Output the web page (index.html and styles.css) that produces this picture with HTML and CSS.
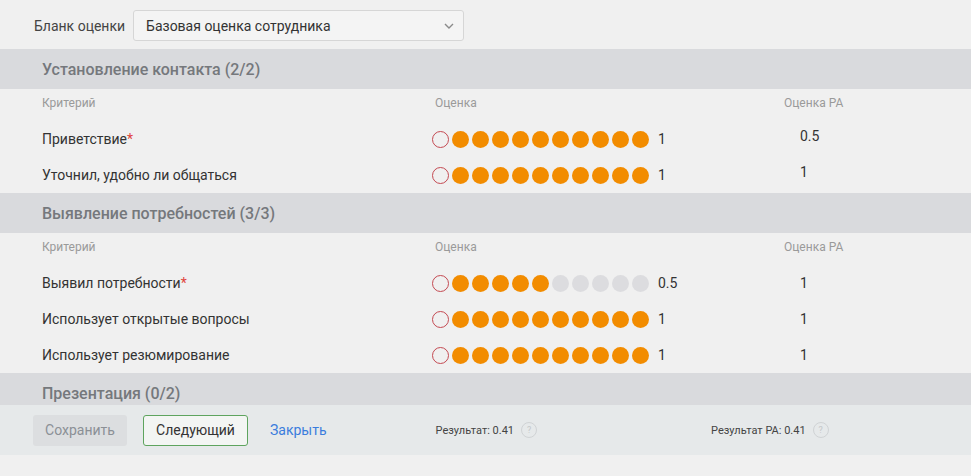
FILE: index.html
```html
<!DOCTYPE html>
<html lang="ru">
<head>
<meta charset="utf-8">
<title>Бланк оценки</title>
<link rel="stylesheet" href="styles.css">
</head>
<body>
<div class="page">
  <div class="topbar">
    <span class="top-label">Бланк оценки</span>
    <div class="select">
      <span>Базовая оценка сотрудника</span>
      <svg class="chev" width="10" height="6" viewBox="0 0 10 6"><path d="M1 1l4 4 4-4" fill="none" stroke="#8a8a8a" stroke-width="1.4"/></svg>
    </div>
  </div>

  <div class="content">
    <div class="section-title">Установление контакта (2/2)</div>
    <div class="row head">
      <div class="c-name">Критерий</div>
      <div class="c-score">Оценка</div>
      <div class="c-pa">Оценка РА</div>
    </div>
    <div class="row">
      <div class="c-name">Приветствие<span class="req">*</span></div>
      <div class="c-score"><span class="dots"><i class="zero"></i><i class="on"></i><i class="on"></i><i class="on"></i><i class="on"></i><i class="on"></i><i class="on"></i><i class="on"></i><i class="on"></i><i class="on"></i><i class="on"></i></span><span class="val">1</span></div>
      <div class="c-pa up">0.5</div>
    </div>
    <div class="row">
      <div class="c-name">Уточнил, удобно ли общаться</div>
      <div class="c-score"><span class="dots"><i class="zero"></i><i class="on"></i><i class="on"></i><i class="on"></i><i class="on"></i><i class="on"></i><i class="on"></i><i class="on"></i><i class="on"></i><i class="on"></i><i class="on"></i></span><span class="val">1</span></div>
      <div class="c-pa up">1</div>
    </div>

    <div class="section-title">Выявление потребностей (3/3)</div>
    <div class="row head">
      <div class="c-name">Критерий</div>
      <div class="c-score">Оценка</div>
      <div class="c-pa">Оценка РА</div>
    </div>
    <div class="row">
      <div class="c-name">Выявил потребности<span class="req">*</span></div>
      <div class="c-score"><span class="dots"><i class="zero"></i><i class="on"></i><i class="on"></i><i class="on"></i><i class="on"></i><i class="on"></i><i></i><i></i><i></i><i></i><i></i></span><span class="val">0.5</span></div>
      <div class="c-pa">1</div>
    </div>
    <div class="row">
      <div class="c-name">Использует открытые вопросы</div>
      <div class="c-score"><span class="dots"><i class="zero"></i><i class="on"></i><i class="on"></i><i class="on"></i><i class="on"></i><i class="on"></i><i class="on"></i><i class="on"></i><i class="on"></i><i class="on"></i><i class="on"></i></span><span class="val">1</span></div>
      <div class="c-pa">1</div>
    </div>
    <div class="row">
      <div class="c-name">Использует резюмирование</div>
      <div class="c-score"><span class="dots"><i class="zero"></i><i class="on"></i><i class="on"></i><i class="on"></i><i class="on"></i><i class="on"></i><i class="on"></i><i class="on"></i><i class="on"></i><i class="on"></i><i class="on"></i></span><span class="val">1</span></div>
      <div class="c-pa">1</div>
    </div>

    <div class="section-title">Презентация (0/2)</div>
  </div>

  <div class="footer">
    <button class="btn btn-save">Сохранить</button>
    <button class="btn btn-next">Следующий</button>
    <a class="link-close">Закрыть</a>
    <div class="result r1">Результат: 0.41 <span class="help">?</span></div>
    <div class="result r2">Результат РА: 0.41 <span class="help">?</span></div>
  </div>
</div>
</body>
</html>
```

FILE: styles.css
```css
html, body {
  margin: 0;
  padding: 0;
  background: #f0f0f0;
  font-family: Roboto, "Liberation Sans", Arial, sans-serif;
  color: #333;
}
.page {
  width: 971px;
}
.topbar {
  height: 49px;
  display: flex;
  align-items: center;
  padding-left: 34px;
  box-sizing: border-box;
  padding-top: 2px;
}
.top-label {
  font-size: 14px;
  color: #444;
  margin-right: 8px;
}
.select {
  width: 331px;
  height: 31px;
  box-sizing: border-box;
  border: 1px solid #d6d6d6;
  border-radius: 3px;
  background: #f4f4f4;
  display: flex;
  align-items: center;
  justify-content: space-between;
  padding: 0 9px 0 12px;
  font-size: 14px;
  color: #333;
}
.chev { display: block; }
.content {
  height: 356px;
  overflow: hidden;
}
.section-title {
  height: 40px;
  background: #d9dadd;
  display: flex;
  align-items: center;
  padding-left: 42px;
  font-size: 16px;
  font-weight: 500;
  color: #75787c;
}
.row {
  display: flex;
  align-items: center;
  height: 36px;
  font-size: 14px;
  color: #333;
}
.row.head {
  height: 32px;
  align-items: flex-start;
  padding-top: 7px;
  box-sizing: border-box;
  font-size: 12px;
  color: #9a9a9a;
}
.c-name {
  width: 390px;
  padding-left: 42px;
}
.row.head .c-score { padding-left: 3px; width: 349px; }
.c-score {
  width: 352px;
  display: flex;
  align-items: center;
}
.c-pa { width: 120px; }
.row:not(.head) .c-pa { padding-left: 16px; }
.c-pa.up { position: relative; top: -3px; }
.req { color: #e0443c; }
.dots {
  display: flex;
  align-items: center;
  gap: 3px;
}
.dots i {
  width: 17px;
  height: 17px;
  border-radius: 50%;
  background: #dcdcdf;
  box-sizing: border-box;
}
.dots i.on { background: #f28c00; }
.dots i.zero {
  background: transparent;
  border: 1.3px solid #c44a52;
}
.val {
  margin-left: 9px;
  font-size: 14px;
  color: #333;
}
.footer {
  height: 50px;
  background: #e6e9ea;
  display: flex;
  align-items: center;
  padding-left: 33px;
  box-sizing: border-box;
}
.btn {
  height: 31px;
  border-radius: 3px;
  font-family: inherit;
  font-size: 14px;
  padding: 0;
  box-sizing: border-box;
}
.btn-save {
  width: 94px;
  background: #dcdee0;
  border: none;
  color: #8b9096;
}
.btn-next {
  width: 105px;
  margin-left: 16px;
  background: #f3f5f3;
  border: 1px solid #5ea45e;
  color: #333;
}
.link-close {
  margin-left: 22px;
  font-size: 14px;
  color: #3b7ddd;
}
.result {
  font-size: 11px;
  color: #444;
  display: flex;
  align-items: center;
}
.r1 { margin-left: 109px; }
.r2 { margin-left: 174px; }
.help {
  width: 16px;
  height: 16px;
  border-radius: 50%;
  border: 1px solid #d0d3d5;
  box-sizing: border-box;
  margin-left: 7px;
  font-size: 9px;
  color: #c4c7c9;
  display: flex;
  align-items: center;
  justify-content: center;
}
```
